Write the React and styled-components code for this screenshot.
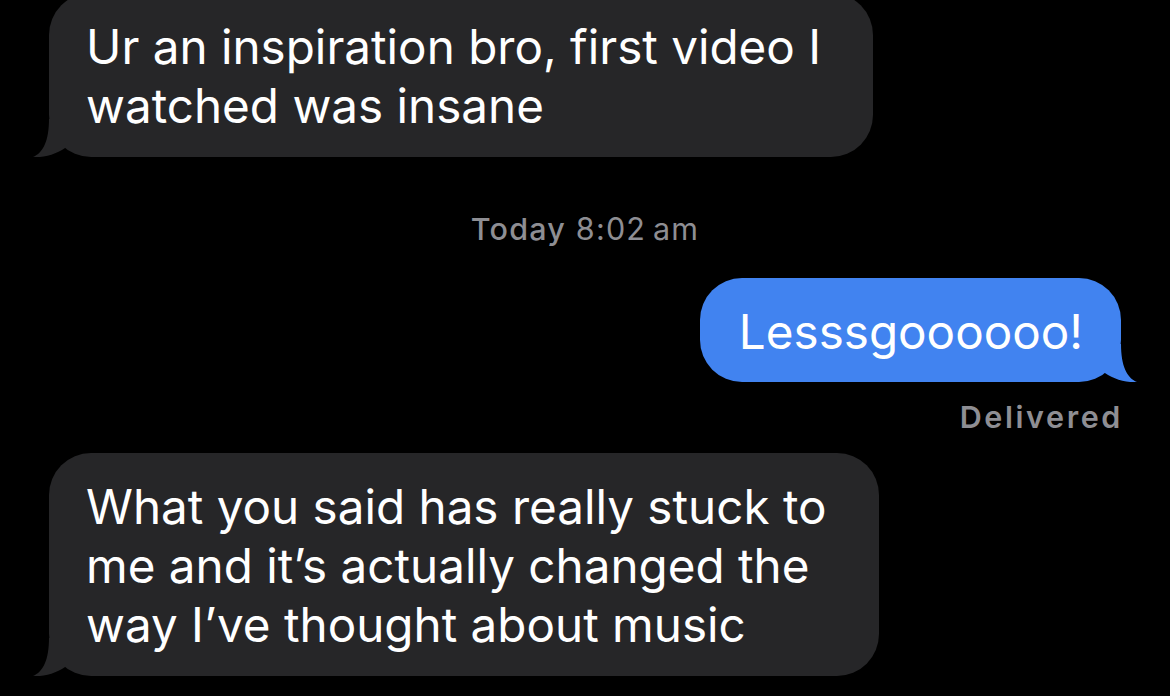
import React from 'react';
import styled, { createGlobalStyle } from 'styled-components';

const GlobalStyle = createGlobalStyle`
  html, body {
    margin: 0;
    padding: 0;
    background: #000;
    overflow: hidden;
  }
  body {
    font-family: Inter, "Liberation Sans", sans-serif;
    -webkit-font-smoothing: antialiased;
  }
`;

const Thread = styled.main`
  width: 1170px;
  height: 696px;
  padding: 0 49px;
  box-sizing: border-box;
  display: flex;
  flex-direction: column;
  background: #000;
`;

const Row = styled.div`
  display: flex;
  flex-direction: column;
  align-items: ${({ $out }) => ($out ? 'flex-end' : 'flex-start')};
  margin-top: ${({ $gap }) => $gap}px;
`;

const Bubble = styled.div`
  position: relative;
  box-sizing: border-box;
  background: ${({ $out }) => ($out ? '#4183f0' : '#262628')};
  color: #fff;
  border-radius: 42px;
  padding: ${({ $out }) => ($out ? '24px 38px 21px 39px' : '24px 52px 22px 37px')};
  font-size: 47.6px;
  line-height: 59px;
`;

const Tail = styled.svg`
  position: absolute;
  bottom: 0;
  width: 40px;
  height: 40px;
  ${({ $out }) => ($out ? 'right: -16px; transform: scaleX(-1);' : 'left: -16px;')}
  fill: ${({ $out }) => ($out ? '#4183f0' : '#262628')};
`;

const Stamp = styled.div`
  align-self: center;
  margin-top: 54px;
  font-size: 30.5px;
  line-height: 36px;
  letter-spacing: 1.2px;
  color: #8e8e93;
  b {
    font-weight: 500;
  }
`;

const Status = styled.div`
  margin-top: 17px;
  font-size: 30.5px;
  line-height: 36px;
  letter-spacing: 2.6px;
  margin-right: -2px;
  font-weight: 600;
  color: #8e8e93;
`;

function Message({ out, children }) {
  return (
    <Bubble $out={out}>
      <Tail $out={out} viewBox="0 0 40 40">
        <path d="M16 2 C16 24 10 36 0 40 C13 41 26 36 35 29 L35 2 Z" />
      </Tail>
      {children}
    </Bubble>
  );
}

export default function App() {
  return (
    <>
      <GlobalStyle />
      <Thread>
        <Row $gap={-7}>
          <Message>
            Ur an inspiration bro, first video I<br />watched was insane
          </Message>
        </Row>
        <Stamp>
          <b>Today</b> 8:02&thinsp;am
        </Stamp>
        <Row $out $gap={31}>
          <Message out>Lesssgoooooo!</Message>
          <Status>Delivered</Status>
        </Row>
        <Row $gap={18}>
          <Message>
            What you said has really stuck to
            <br />
            me and it’s actually changed the
            <br />
            way I’ve thought about music
          </Message>
        </Row>
      </Thread>
    </>
  );
}
